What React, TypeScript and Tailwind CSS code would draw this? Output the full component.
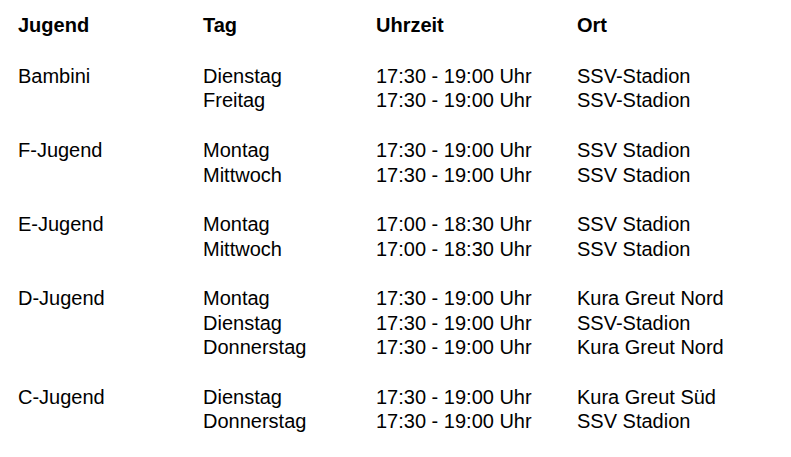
const groups = [
  {
    name: "Bambini",
    rows: [
      ["Dienstag", "17:30 - 19:00 Uhr", "SSV-Stadion"],
      ["Freitag", "17:30 - 19:00 Uhr", "SSV-Stadion"],
    ],
  },
  {
    name: "F-Jugend",
    rows: [
      ["Montag", "17:30 - 19:00 Uhr", "SSV Stadion"],
      ["Mittwoch", "17:30 - 19:00 Uhr", "SSV Stadion"],
    ],
  },
  {
    name: "E-Jugend",
    rows: [
      ["Montag", "17:00 - 18:30 Uhr", "SSV Stadion"],
      ["Mittwoch", "17:00 - 18:30 Uhr", "SSV Stadion"],
    ],
  },
  {
    name: "D-Jugend",
    rows: [
      ["Montag", "17:30 - 19:00 Uhr", "Kura Greut Nord"],
      ["Dienstag", "17:30 - 19:00 Uhr", "SSV-Stadion"],
      ["Donnerstag", "17:30 - 19:00 Uhr", "Kura Greut Nord"],
    ],
  },
  {
    name: "C-Jugend",
    rows: [
      ["Dienstag", "17:30 - 19:00 Uhr", "Kura Greut Süd"],
      ["Donnerstag", "17:30 - 19:00 Uhr", "SSV Stadion"],
    ],
  },
];

export default function App() {
  return (
    <div className="w-[791px] h-[457px] bg-white text-black font-['Liberation_Sans',Arial,sans-serif] text-[20px] leading-[24.7px] pl-[18px] pt-[13px]">
      {/* Kopfzeile */}
      <div className="grid grid-cols-[185px_173px_201px_1fr] font-bold">
        <div>Jugend</div>
        <div>Tag</div>
        <div>Uhrzeit</div>
        <div>Ort</div>
      </div>

      <div className="mt-[26px] flex flex-col gap-[24.7px]">
        {groups.map((g) => (
          <div key={g.name} className="grid grid-cols-[185px_173px_201px_1fr]">
            {g.rows.map((r, i) => (
              <div key={i} className="contents">
                <div>{i === 0 ? g.name : ""}</div>
                <div>{r[0]}</div>
                <div>{r[1]}</div>
                <div>{r[2]}</div>
              </div>
            ))}
          </div>
        ))}
      </div>
    </div>
  );
}
